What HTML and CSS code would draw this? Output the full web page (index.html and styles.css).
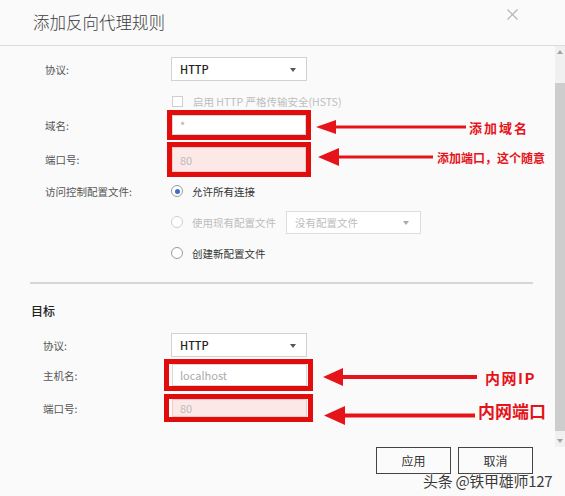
FILE: index.html
```html
<!DOCTYPE html>
<html lang="zh-CN">
<head>
<meta charset="utf-8">
<title>添加反向代理规则</title>
<link rel="stylesheet" href="styles.css">
</head>
<body>
<div class="dialog">
  <div class="hd">
    <div class="title">添加反向代理规则</div>
    <span class="close"><svg width="11" height="11" viewBox="0 0 11 11"><path d="M0.5 0.5 L10.5 10.5 M10.5 0.5 L0.5 10.5" stroke="#b0b0b0" stroke-width="1.1" fill="none"/></svg></span>
  </div>
  <div class="scroll">
    <div class="content">
      <div class="row s1 r1">
        <span class="lbl">协议:</span>
        <div class="select"><span class="val">HTTP</span><i class="caret"></i></div>
      </div>
      <div class="row s1 r2">
        <span class="lbl"></span>
        <span class="check"></span>
        <span class="dis chk-text">启用 HTTP 严格传输安全(HSTS)</span>
      </div>
      <div class="row s1 r3">
        <span class="lbl">域名:</span>
        <div class="mark m1"><div class="input ph">*</div></div>
        <svg class="arrow a1" width="150" height="14" viewBox="0 0 150 14"><path d="M0 7 L20 0 L20 14 Z" fill="#e5141a"/><rect x="18" y="5.5" width="132" height="3" fill="#e5141a"/></svg>
        <span class="note n1">添加域名</span>
      </div>
      <div class="row s1 r4">
        <span class="lbl">端口号:</span>
        <div class="mark m2"><div class="input pink">80</div></div>
        <svg class="arrow a2" width="115" height="18" viewBox="0 0 115 18"><path d="M0 9 L21 0 L21 18 Z" fill="#e5141a"/><rect x="19" y="7.5" width="96" height="3" fill="#e5141a"/></svg>
        <span class="note n2">添加端口，这个随意</span>
      </div>
      <div class="row s1 r5">
        <span class="lbl">访问控制配置文件:</span>
        <span class="radio on"></span>
        <span class="rtext">允许所有连接</span>
      </div>
      <div class="row s1 r6">
        <span class="lbl"></span>
        <span class="radio off"></span>
        <span class="rtext dis">使用现有配置文件</span>
        <div class="select disabled"><span class="val">没有配置文件</span><i class="caret"></i></div>
      </div>
      <div class="row s1 r7">
        <span class="lbl"></span>
        <span class="radio"></span>
        <span class="rtext">创建新配置文件</span>
      </div>
      <div class="sep"></div>
      <div class="section-title">目标</div>
      <div class="row s2 r8">
        <span class="lbl">协议:</span>
        <div class="select"><span class="val">HTTP</span><i class="caret"></i></div>
      </div>
      <div class="row s2 r9">
        <span class="lbl">主机名:</span>
        <div class="mark m3"><div class="input ph">localhost</div></div>
        <svg class="arrow a3" width="154" height="18" viewBox="0 0 154 18"><path d="M0 9 L20 0 L20 18 Z" fill="#e5141a"/><rect x="18" y="7" width="136" height="4" fill="#e5141a"/></svg>
        <span class="note n3">内网IP</span>
      </div>
      <div class="row s2 r10">
        <span class="lbl">端口号:</span>
        <div class="mark m4"><div class="input pink">80</div></div>
        <svg class="arrow a4" width="151" height="19" viewBox="0 0 151 19"><path d="M0 9.5 L21 0 L21 19 Z" fill="#e5141a"/><rect x="19" y="7.5" width="132" height="4" fill="#e5141a"/></svg>
        <span class="note n4">内网端口</span>
      </div>
    </div>
    <div class="scrollbar">
      <span class="sb-btn"><i class="tri up"></i></span>
      <span class="thumb"></span>
      <span class="sb-btn"><i class="tri down"></i></span>
    </div>
  </div>
  <div class="ft">
    <button class="btn">应用</button>
    <button class="btn">取消</button>
  </div>
  <div class="watermark">头条 @铁甲雄师127</div>
</div>
</body>
</html>
```
FILE: styles.css
```css
* { box-sizing: border-box; }
html, body { margin: 0; padding: 0; }
body {
  width: 565px;
  height: 496px;
  overflow: hidden;
  background: #fafafa;
  font-family: "Noto Sans CJK SC", "Noto Sans", sans-serif;
  color: #333;
}
.dialog {
  position: relative;
  width: 565px;
  height: 496px;
  display: flex;
  flex-direction: column;
  overflow: hidden;
}
.hd {
  position: relative;
  height: 46px;
  flex: none;
  border-bottom: 1px solid #dcdcdc;
  display: flex;
  align-items: center;
  padding-left: 33px;
}
.title {
  font-size: 16.5px;
  font-weight: 300;
  color: #3a3a3a;
  line-height: 20px;
  margin-top: -1px;
}
.close {
  position: absolute;
  right: 47px;
  top: 9px;
  display: flex;
}

.scroll {
  height: 401px;
  flex: none;
  display: flex;
  overflow: hidden;
  min-width: 0;
}
.content {
  flex: 1 1 0;
  min-width: 0;
  padding: 11px 22px 0 30px;
}
.row {
  display: flex;
  align-items: center;
  font-size: 10.5px;
}
.s1 { padding-left: 15px; }
.s1 .lbl { width: 126px; }
.s2 { padding-left: 13px; }
.s2 .lbl { width: 128px; }
.lbl { flex: none; color: #555; }

.r1 { height: 24px; }
.r2 { height: 18px; margin-top: 11px; }
.r3 { height: 30px; }
.r4 { height: 35px; margin-top: 2px; }
.r5 { height: 24px; margin-top: 2px; }
.r6 { height: 24px; margin-top: 7px; }
.r7 { height: 24px; margin-top: 7px; }
.r8 { height: 24px; margin-top: 13px; }
.r9 { height: 32px; margin-top: 2px; }
.r10 { height: 28px; margin-top: 3px; }

.select {
  position: relative;
  flex: none;
  width: 136px;
  height: 24px;
  background: #fff;
  border: 1px solid #d2d2d2;
  display: flex;
  align-items: center;
  padding-left: 8px;
}
.select .val { font-size: 11px; font-weight: 500; color: #222; }
.caret {
  position: absolute;
  right: 10px;
  top: 10px;
  width: 0; height: 0;
  border-left: 3.5px solid transparent;
  border-right: 3.5px solid transparent;
  border-top: 4px solid #555;
}
.select.disabled {
  width: 135px;
  height: 23px;
  margin-left: 10px;
  border-color: #ddd;
  padding-left: 8px;
}
.select.disabled .val { color: #bdbdbd; font-weight: 400; font-size: 10.5px; }
.select.disabled .caret { border-top-color: #aaa; right: 11px; top: 9px; }

.check {
  width: 11px; height: 11px;
  margin-left: 1px;
  border: 1px solid #cfcfcf;
  background: #fff;
  flex: none;
}
.chk-text { margin-left: 10px; white-space: nowrap; }
.dis { color: #bdbdbd; }

.mark {
  border: 5px solid #e10d0d;
  margin-left: -4px;
  flex: none;
}
.m1 { width: 144px; height: 30px; }
.m2 { width: 144px; height: 35px; }
.m3 { width: 149px; height: 32px; margin-left: -7px; padding: 0 1px 0 3px; }
.m4 { width: 149px; height: 28px; margin-left: -7px; padding: 0 1px 0 3px; }
.input {
  height: 100%;
  width: 100%;
  background: #fff;
  border: 1px solid #d8d8d8;
  display: flex;
  align-items: center;
  padding-left: 7px;
  font-size: 11px;
}
.input.ph { color: #aaa; }
.input.pink { background: #fde8e8; border-color: #f4c9c9; color: #bbb; }

.arrow { flex: none; display: block; }
.a1 { margin-left: 5px; margin-top: 4px; }
.a2 { margin-left: 7px; margin-bottom: 5px; }
.a3 { margin-left: 10px; margin-top: 4px; }
.a4 { margin-left: 11px; margin-top: 14px; }
.note {
  color: #e5141a;
  font-weight: 700;
  flex: none;
  white-space: nowrap;
}
.n1 { font-size: 13px; letter-spacing: 2px; margin-left: 3px; margin-top: 4px; }
.n2 { font-size: 12px; margin-left: 4px; margin-bottom: 5px; }
.n3 { font-size: 15px; letter-spacing: 1.5px; margin-left: 8px; margin-top: 4px; }
.n4 { font-size: 17px; margin-left: 3px; margin-top: 4px; }

.radio {
  width: 12px; height: 12px;
  border-radius: 50%;
  border: 1px solid #9a9a9a;
  background: #fff;
  flex: none;
  position: relative;
}
.radio.on::after {
  content: "";
  position: absolute;
  left: 2.5px; top: 2.5px;
  width: 5px; height: 5px;
  border-radius: 50%;
  background: #3b6fc4;
}
.radio.off { border-color: #cfcfcf; }
.rtext { margin-left: 9px; color: #333; white-space: nowrap; }
.rtext.dis { color: #bdbdbd; }

.sep {
  height: 2px;
  background: #d6d6d6;
  margin-top: 17px;
}
.section-title {
  height: 20px;
  margin-top: 16px;
  display: flex;
  align-items: center;
  font-size: 12px;
  font-weight: 500;
  color: #222;
  padding-left: 1px;
}

.scrollbar {
  width: 10px;
  flex: none;
  background: #f0f0f0;
  display: flex;
  flex-direction: column;
}
.sb-btn {
  height: 12px;
  display: flex;
  align-items: center;
  justify-content: center;
  flex: none;
}
.tri { width: 0; height: 0; border-left: 3px solid transparent; border-right: 3px solid transparent; }
.tri.up { border-bottom: 4px solid #a3a3a3; }
.tri.down { border-top: 4px solid #a3a3a3; }
.thumb {
  height: 348px;
  margin: 25px 0 4px;
  background: #cdcdcd;
  flex: none;
}

.ft {
  flex: 1;
  display: flex;
  justify-content: flex-end;
  align-items: flex-start;
  gap: 7px;
  padding: 0 32px 0 0;
}
.btn {
  width: 75px;
  height: 27px;
  background: #fbfbfb;
  border: 1px solid #444;
  border-radius: 0;
  font-family: "Noto Sans CJK SC", sans-serif;
  font-size: 12px;
  color: #333;
  padding: 0;
}

.watermark {
  position: absolute;
  left: 423px;
  top: 470px;
  font-size: 15px;
  color: #3a3a3a;
  white-space: nowrap;
  letter-spacing: -0.3px;
  text-shadow: 0 0 2px #fff, 0 0 2px #fff, 0 0 1px #fff;
}
```
